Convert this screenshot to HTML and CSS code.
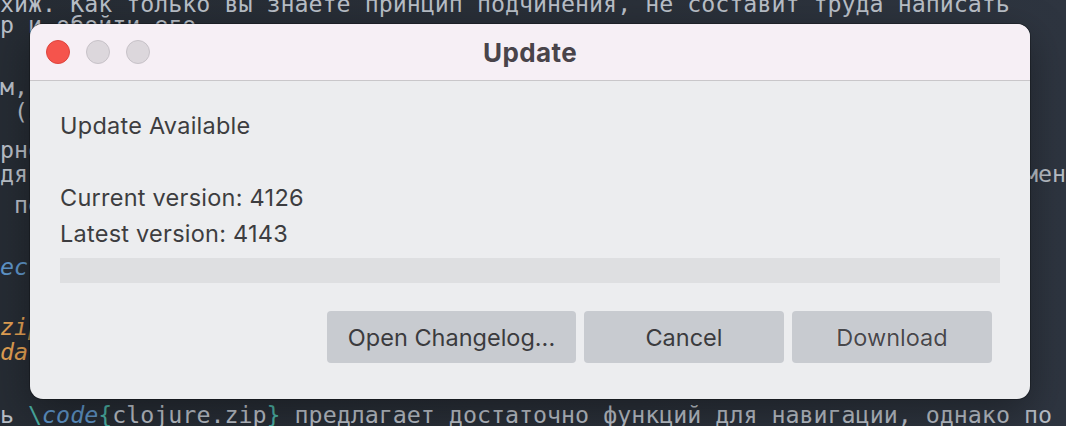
FILE: index.html
```html
<!DOCTYPE html>
<html lang="ru">
<head>
<meta charset="utf-8">
<title>Update</title>
<link rel="stylesheet" href="styles.css">
</head>
<body>
<div class="editor">
  <div class="ln l1">хиж. Как только вы знаете принцип подчинения, не составит труда написать</div>
  <div class="ln l2">р и обойти его.</div>
  <div class="ln l3">м, который принимает дерево и функцию.</div>
  <div class="ln l4"> (zip/vector-zip data)</div>
  <div class="ln l5">рно, каждый узел дерева обходится один раз.</div>
  <div class="ln l6">дя по дереву, мы можем применить функцию к каждому элементу и получить измен</div>
  <div class="ln l7"> первоначальную структуру.</div>
  <div class="ln l8"><span class="kw">ection</span>{Навигация}</div>
  <div class="ln l9"><span class="fn">zip/down</span></div>
  <div class="ln l10"><span class="fn">data</span></div>
  <div class="ln l11">ь <span class="op">\</span><span class="kw">code</span><span class="op">{</span>clojure.zip<span class="op">}</span> предлагает достаточно функций для навигации, однако по</div>
</div>

<div class="dialog">
  <div class="titlebar">
    <div class="lights">
      <span class="light close"></span>
      <span class="light"></span>
      <span class="light"></span>
    </div>
    <div class="title">Update</div>
  </div>
  <div class="content">
    <div class="heading">Update Available</div>
    <div class="versions">
      <div class="line">Current version: 4126</div>
      <div class="line">Latest version: 4143</div>
    </div>
    <div class="progress"></div>
    <div class="buttons">
      <button class="btn wide">Open Changelog...</button>
      <button class="btn">Cancel</button>
      <button class="btn default">Download</button>
    </div>
  </div>
</div>
</body>
</html>
```

FILE: styles.css
```css
html, body {
  margin: 0;
  padding: 0;
}
body {
  width: 1066px;
  height: 426px;
  overflow: hidden;
  background: linear-gradient(90deg, #262c34 0%, #2a3039 60%, #2e3540 100%);
  position: relative;
}
.editor {
  font-family: "DejaVu Sans Mono", "Liberation Mono", monospace;
  font-size: 23.3px;
  line-height: 24px;
  color: #b9bfc7;
}
.ln {
  height: 24px;
  white-space: pre;
}
.l1 { margin-top: -8px; }
.l2 { margin-top: -3px; }
.l3 { margin-top: 38px; }
.l4 { margin-top: 1px; }
.l5 { margin-top: 14px; }
.l6 { margin-top: 0; }
.l7 { margin-top: 7px; }
.l8 { margin-top: 38px; }
.l9 { margin-top: 36px; }
.l10 { margin-top: 1px; }
.l11 { margin-top: 39px; }
.kw { color: #5f95c8; font-style: italic; }
.fn { color: #e2a053; font-style: italic; }
.op { color: #4bb0a4; }

.dialog {
  position: absolute;
  left: 30px;
  top: 24px;
  width: 1000px;
  height: 375px;
  border-radius: 13px;
  overflow: hidden;
  background: #ecedef;
  box-shadow: 0 0 0 1px rgba(0,0,0,0.25), 0 12px 40px rgba(0,0,0,0.35);
  font-family: Inter, "Noto Sans", sans-serif;
  color: #3d3d40;
}
.titlebar {
  height: 56px;
  background: #f6eff5;
  border-bottom: 1px solid #c9c7ca;
  display: flex;
  align-items: center;
  position: relative;
}
.lights {
  display: flex;
  gap: 16px;
  padding-left: 16px;
}
.light {
  width: 22px;
  height: 22px;
  border-radius: 50%;
  background: #dcd7dc;
  border: 1px solid #c7c2c8;
}
.light.close {
  background: #f5544c;
  border-color: #de443d;
}
.title {
  position: absolute;
  left: 0;
  right: 0;
  text-align: center;
  font-weight: 700;
  font-size: 26px;
  letter-spacing: 0.4px;
  color: #49444a;
  pointer-events: none;
}
.content {
  padding: 31px 30px 0 30px;
  display: flex;
  flex-direction: column;
}
.heading {
  font-size: 23.5px;
  letter-spacing: 0.25px;
  line-height: 28px;
}
.versions {
  margin-top: 44px;
  display: flex;
  flex-direction: column;
  gap: 8px;
}
.line {
  font-size: 23.5px;
  letter-spacing: 0.25px;
  line-height: 28px;
}
.progress {
  margin-top: 10px;
  height: 25px;
  background: #dedfe1;
}
.buttons {
  margin-top: 28px;
  display: flex;
  justify-content: flex-end;
  gap: 8px;
  padding-right: 8px;
}
.btn {
  width: 200px;
  height: 52px;
  border: none;
  border-radius: 4px;
  background: #c8cbd0;
  font-family: Inter, "Noto Sans", sans-serif;
  font-size: 23.5px;
  color: #3b3b3e;
  padding: 0;
}
.btn.wide { width: 249px; }
.btn.default {
  color: #48484c;
  text-shadow: 0 0 1px rgba(255,255,255,0.7);
}
```
